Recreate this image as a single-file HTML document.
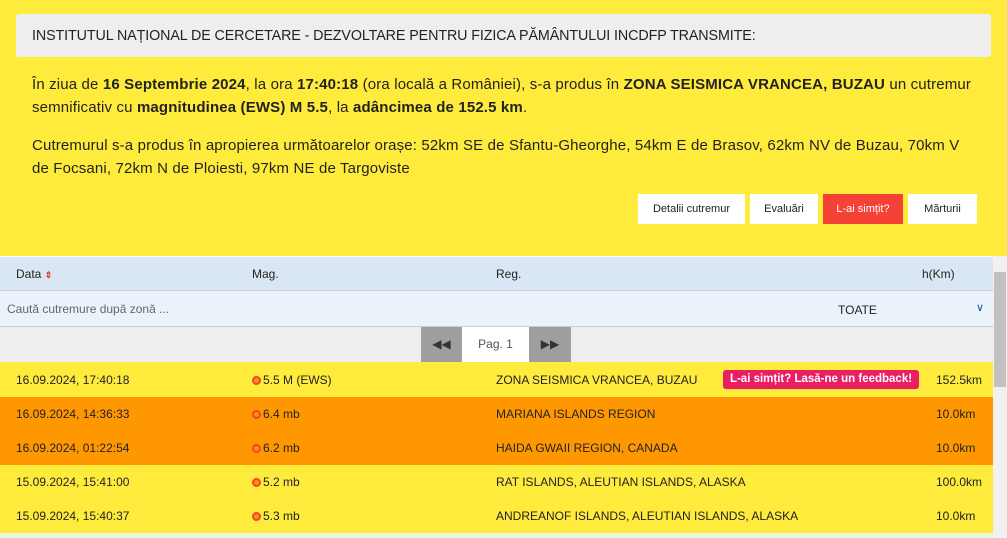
<!DOCTYPE html>
<html><head><meta charset="utf-8"><style>
*{margin:0;padding:0;box-sizing:border-box}
body{width:1007px;height:538px;overflow:hidden;font-family:"Liberation Sans",sans-serif;background:#fff;position:relative;color:#222}
.top{position:absolute;left:0;top:0;width:1007px;height:256px;background:#ffeb3b}
.hdr{position:absolute;left:16px;top:14px;width:975px;height:43px;background:#eeeeee;border-radius:3px;font-size:14.3px;padding:14px 0 0 16px;letter-spacing:-0.1px}
.p{position:absolute;left:32px;width:975px;font-size:15px;line-height:23px;letter-spacing:0.15px}
.btn{position:absolute;top:194px;height:30px;background:#fff;font-size:11px;text-align:center;line-height:30px}
.row{position:absolute;left:0;width:993px;font-size:12px}
.row span{position:absolute;top:0}
.sb{position:absolute;left:993px;top:256px;width:14px;height:282px;background:#f1f1f1}
.th{position:absolute;left:994px;top:272px;width:12px;height:115px;background:#c1c1c1}
.dot{display:inline-block;width:9px;height:9px;border-radius:50%;border:2px solid #f44336;background:#ff9800;margin-right:2px;vertical-align:-1px}
</style></head><body>
<div class="top">
<div class="hdr">INSTITUTUL NAȚIONAL DE CERCETARE - DEZVOLTARE PENTRU FIZICA PĂMÂNTULUI INCDFP TRANSMITE:</div>
<div class="p" style="top:73px">În ziua de <b>16 Septembrie 2024</b>, la ora <b>17:40:18</b> (ora locală a României), s-a produs în <b>ZONA SEISMICA VRANCEA, BUZAU</b> un cutremur<br>semnificativ cu <b>magnitudinea (EWS) M 5.5</b>, la <b>adâncimea de 152.5 km</b>.</div>
<div class="p" style="top:134px">Cutremurul s-a produs în apropierea următoarelor orașe: 52km SE de Sfantu-Gheorghe, 54km E de Brasov, 62km NV de Buzau, 70km V<br>de Focsani, 72km N de Ploiesti, 97km NE de Targoviste</div>
<div class="btn" style="left:638px;width:107px">Detalii cutremur</div>
<div class="btn" style="left:750px;width:68px">Evaluări</div>
<div class="btn" style="left:823px;width:80px;background:#f44336;color:#fff">L-ai simțit?</div>
<div class="btn" style="left:908px;width:69px">Mărturii</div>
</div>
<div class="row" style="top:257px;height:34px;background:#d8e7f3;border-bottom:1px solid #c8d4dd"><span style="left:16px;top:10px">Data <b style="color:#e53935;font-size:9px">⇕</b></span><span style="left:252px;top:10px">Mag.</span><span style="left:496px;top:10px">Reg.</span><span style="left:922px;top:10px">h(Km)</span></div>
<div class="row" style="top:291px;height:36px;background:#eaf3fa;border-bottom:1px solid #ccc"><span style="left:7px;top:11px;color:#666">Caută cutremure după zonă ...</span><span style="left:838px;top:12px">TOATE</span><span style="left:976px;top:10px;font-size:11px;color:#1a4f8a">&#x2228;</span></div>
<div class="row" style="top:327px;height:35px;background:#eeeeee">
<span style="left:421px;width:41px;height:35px;background:#9e9e9e;text-align:center;line-height:35px;color:#333">&#9664;&#9664;</span>
<span style="left:462px;width:67px;height:35px;background:#fff;text-align:center;line-height:35px;color:#555">Pag. 1</span>
<span style="left:529px;width:42px;height:35px;background:#9e9e9e;text-align:center;line-height:35px;color:#333">&#9654;&#9654;</span></div>
<div class="row" style="top:362px;height:35px;background:#ffeb3b"><span style="left:16px;top:11px">16.09.2024, 17:40:18</span><span style="left:252px;top:11px"><i class="dot"></i>5.5 M (EWS)</span><span style="left:496px;top:11px">ZONA SEISMICA VRANCEA, BUZAU</span><span style="left:723px;top:8px;width:196px;height:19px;background:#e91e63;color:#fff;border-radius:3px;text-align:center;line-height:19px;font-weight:bold;font-size:11.5px">L-ai simțit? Lasă-ne un feedback!</span><span style="left:936px;top:11px">152.5km</span></div>
<div class="row" style="top:397px;height:34px;background:#ff9800"><span style="left:16px;top:10px">16.09.2024, 14:36:33</span><span style="left:252px;top:10px"><i class="dot"></i>6.4 mb</span><span style="left:496px;top:10px">MARIANA ISLANDS REGION</span><span style="left:936px;top:10px">10.0km</span></div>
<div class="row" style="top:431px;height:34px;background:#ff9800"><span style="left:16px;top:10px">16.09.2024, 01:22:54</span><span style="left:252px;top:10px"><i class="dot"></i>6.2 mb</span><span style="left:496px;top:10px">HAIDA GWAII REGION, CANADA</span><span style="left:936px;top:10px">10.0km</span></div>
<div class="row" style="top:465px;height:34px;background:#ffeb3b"><span style="left:16px;top:10px">15.09.2024, 15:41:00</span><span style="left:252px;top:10px"><i class="dot"></i>5.2 mb</span><span style="left:496px;top:10px">RAT ISLANDS, ALEUTIAN ISLANDS, ALASKA</span><span style="left:936px;top:10px">100.0km</span></div>
<div class="row" style="top:499px;height:34px;background:#ffeb3b"><span style="left:16px;top:10px">15.09.2024, 15:40:37</span><span style="left:252px;top:10px"><i class="dot"></i>5.3 mb</span><span style="left:496px;top:10px">ANDREANOF ISLANDS, ALEUTIAN ISLANDS, ALASKA</span><span style="left:936px;top:10px">10.0km</span></div>
<div class="row" style="top:533px;height:5px;background:#e8f8e0"></div>
<div class="sb"></div><div class="th"></div>
</body></html>
